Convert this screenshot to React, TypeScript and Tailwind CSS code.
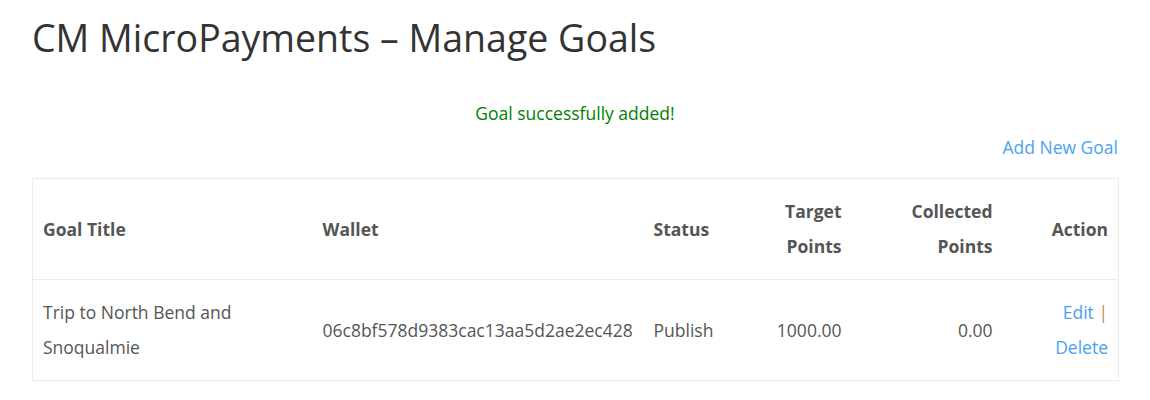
export default function App() {
  const th = "font-bold px-[10px] py-[15px] align-middle";
  const td = "px-[10px] py-[15px] align-middle";
  return (
    <div className="w-[1150px] h-[400px] bg-white text-[#555] font-['Open_Sans',sans-serif] px-[32px] overflow-hidden">
      <h1 className="text-[37.5px] leading-[46px] text-[#333] font-normal pt-[15px]">CM MicroPayments – Manage Goals</h1>
      <p className="text-center text-[17.5px] text-[#008000] mt-[40px] leading-[24px]">Goal successfully added!</p>
      <div className="flex justify-end mt-[10px]">
        <a className="text-[17.5px] text-[#4aa3ef] leading-[24px]">Add New Goal</a>
      </div>
      <table className="table-fixed w-[1086px] border border-[#ebebeb] border-collapse mt-[19px] text-[17.5px] leading-[35px]">
        <colgroup>
          <col className="w-[280px]" />
          <col className="w-[331px]" />
          <col className="w-[100px]" />
          <col className="w-[108px]" />
          <col className="w-[151px]" />
          <col className="w-[116px]" />
        </colgroup>
        <thead>
          <tr className="border-b border-[#ebebeb]">
            <th className={`${th} text-left`}>Goal Title</th>
            <th className={`${th} text-left`}>Wallet</th>
            <th className={`${th} text-left`}>Status</th>
            <th className={`${th} text-right`}>Target<br />Points</th>
            <th className={`${th} text-right`}>Collected<br />Points</th>
            <th className={`${th} text-right`}>Action</th>
          </tr>
        </thead>
        <tbody>
          <tr>
            <td className={td}>Trip to North Bend and Snoqualmie</td>
            <td className={td}>06c8bf578d9383cac13aa5d2ae2ec428</td>
            <td className={td}>Publish</td>
            <td className={`${td} text-right`}>1000.00</td>
            <td className={`${td} text-right`}>0.00</td>
            <td className={`${td} text-right`}>
              <a className="text-[#4aa3ef]">Edit</a> <span className="text-[#c08a50]">|</span><br />
              <a className="text-[#4aa3ef]">Delete</a>
            </td>
          </tr>
        </tbody>
      </table>
    </div>
  );
}
